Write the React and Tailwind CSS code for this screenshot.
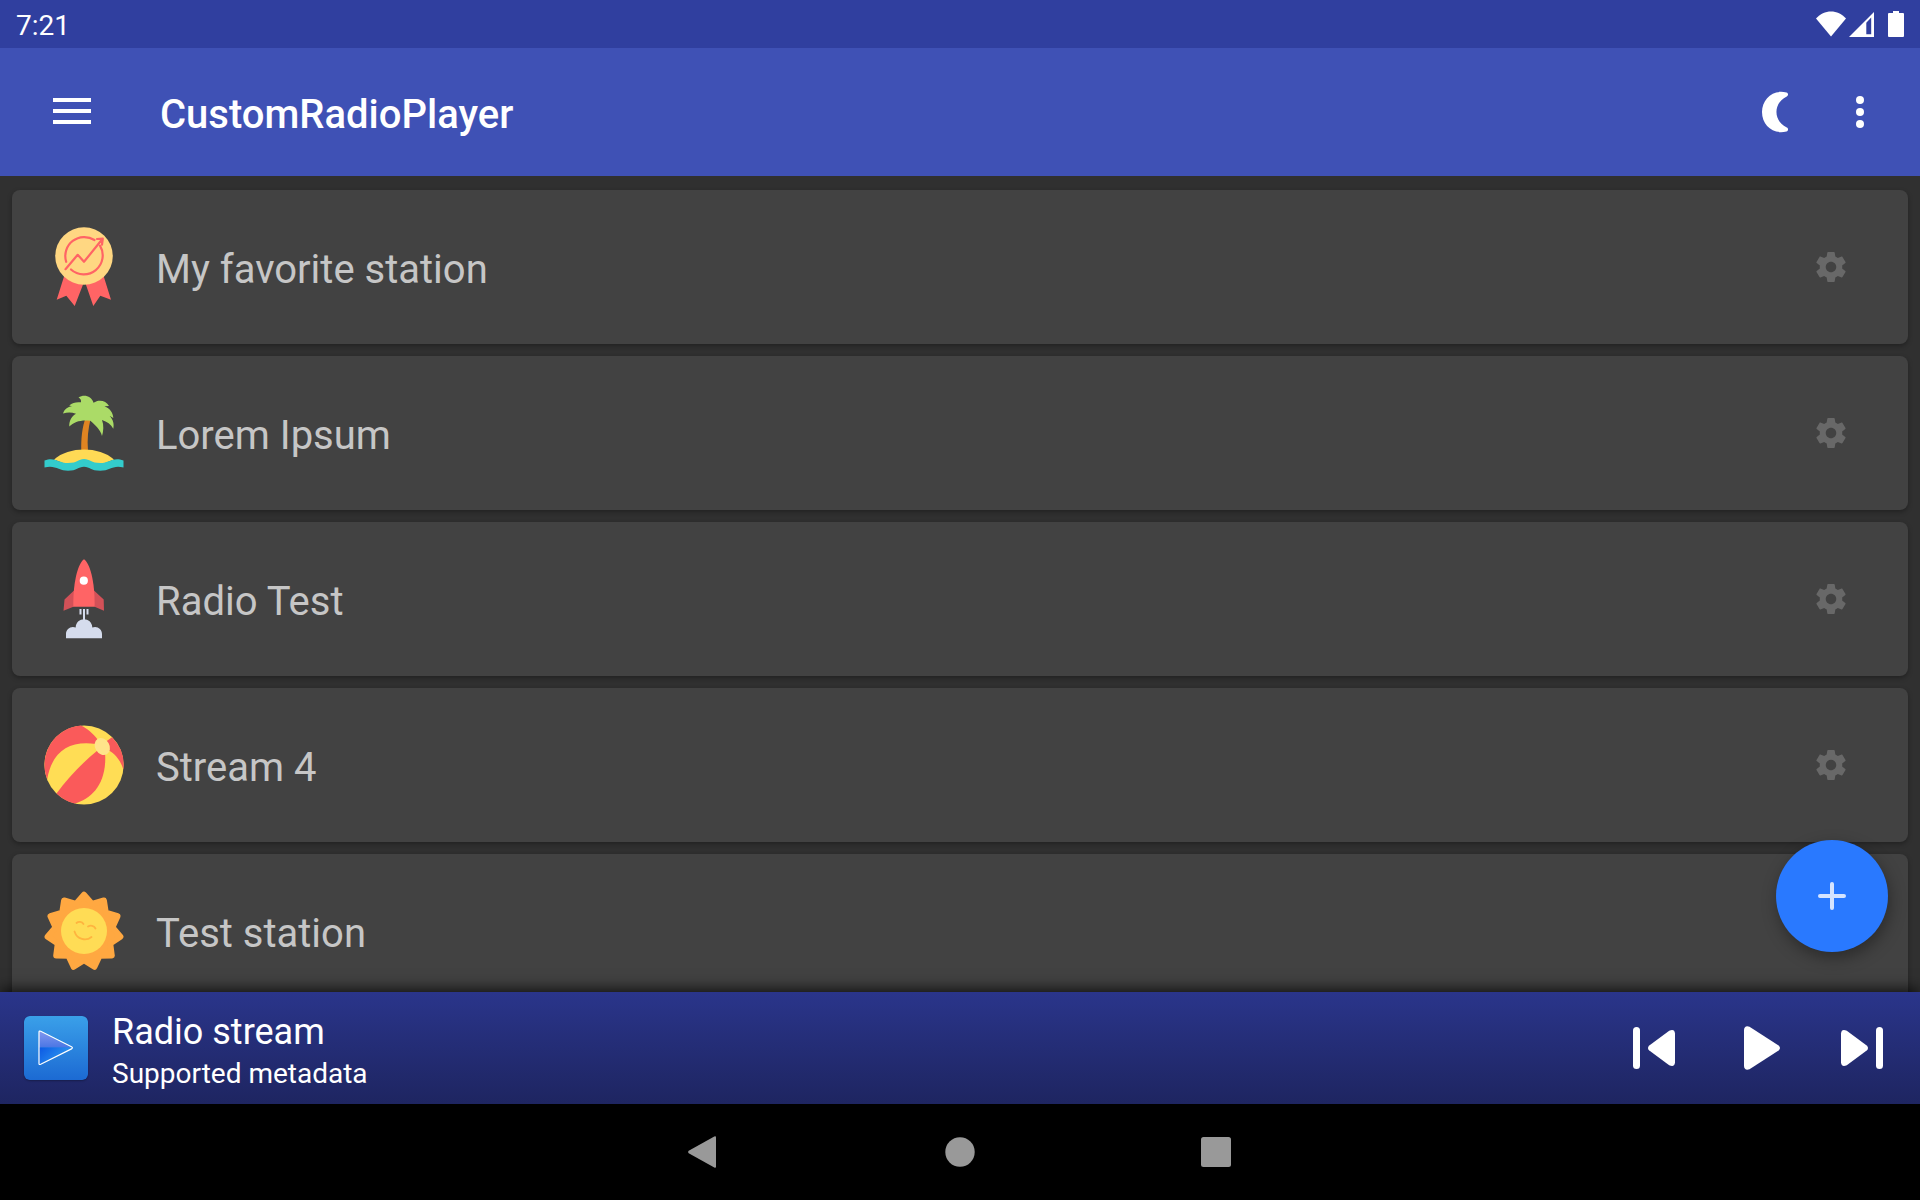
import React from "react";

function MedalIcon() {
  return (
    <svg viewBox="0 0 80 80" className="size-20 shrink-0" aria-hidden="true">
      <path fill="#ff6465" d="M20.5 48 12.7 72.7l9.6-4 8.4 10.3L40 55ZM59.3 48 67 72.7l-10.7-4-7 10.3L41 55Z" />
      <circle cx="40" cy="29" r="28.8" fill="#ffd782" />
      <g fill="none" stroke="#ff6465" strokeWidth="2.2" strokeLinecap="round" strokeLinejoin="round">
        <path d="M22.2 34.8A19 19 0 0 1 50.5 13M56 18.6A19 19 0 0 1 27 42.5" />
        <path d="M21.5 42.2 33.7 27.8l6.3 7L58.6 11.8M53 12l5.8-.4-.8 6" />
      </g>
    </svg>
  );
}

function IslandIcon() {
  return (
    <svg viewBox="0 0 80 80" className="size-20 shrink-0" aria-hidden="true">
      <path fill="#df8422" d="M42 24C38 34 37 46 37.3 58H44C43 46 44 36 47 24Z" />
      <path
        fill="#abdb67"
        d="M34.500 4.500C40 1 47.500 3 49.500 9.700C55 6 62 7.500 65 13L60.500 13.200C66 15.500 69 19.500 69.300 25L65.500 22.800C69.500 27 70.200 31.500 69.300 35.700C67 31.500 63 28.500 58 27C60 32.500 59.500 38 58 43C56.500 36.500 51 32 46.300 27.800C38 26.500 30 28.500 25.300 33.500C25 28 27.500 23.500 32 20.800C27.500 19 23.500 19 19 20.500C20.500 16 23.500 14 28 13.300L25.200 12.500C28.500 9.300 33 8.800 37 9.300C37.500 7 36 5 34.500 4.500Z"
      />
      <path fill="#ffda55" d="M10 66.500C25 53.200 55 53.200 70 66.500L56 72H24Z" />
      <path
        fill="#33cccc"
        d="M.5 67.500C11 63.500 14 70 24 70S34 66 40 66s7 4 16.300 4S69 63.500 79.500 67.500V74.500C69 71.500 66 77.700 56.300 77.700S46 73.700 40 73.700s-7 4-16 4S11 71.500.5 74.500Z"
      />
    </svg>
  );
}

function RocketIcon() {
  return (
    <svg viewBox="0 0 80 80" className="size-20 shrink-0" aria-hidden="true">
      <path fill="#d35158" d="M30 31.500 20.500 40.500 19.500 51.700 30 47.500ZM50 31.500 59.700 40.500 60 51.700 50 47.500Z" />
      <path fill="#ff6465" d="M40 .3C34.500 4 29 21 29.300 47.700H50.600C51 21 45.500 4 40 .3Z" />
      <circle cx="39.800" cy="21.700" r="4.100" fill="#fff" />
      <path stroke="#d5dced" strokeWidth="2" d="M36.500 50v5.500M43.500 50v5.500M40 50v12" />
      <path fill="#d5dced" d="M22 79.300V75C22 70 27 66.500 31.700 68.500C32 57.500 48 57.500 48.300 68.500C53 66.500 58 70 58 75V79.300Z" />
    </svg>
  );
}

function BallIcon() {
  return (
    <svg viewBox="0 0 80 80" className="size-20 shrink-0" aria-hidden="true">
      <circle cx="40" cy="40" r="39.600" fill="#ffdd55" />
      <g fill="#fa5a5a">
        <path d="M36.700.5A39.600 39.600 0 0 0 3.200 54.300C8 26 26 15 52 19L54 15C49 8.500 43 3 36.700.5Z" />
        <path d="M68 12.300A39.600 39.600 0 0 1 79.400 44.500C76 34 70 27.500 62 24L60 18Z" />
        <path d="M53.500 25.500C38 38 24 53 12.500 68.500A39.600 39.600 0 0 0 30.500 78.500C48 74 63.500 58 61 27Z" />
      </g>
      <ellipse cx="58.300" cy="21.500" rx="7.200" ry="9" transform="rotate(-30 58.300 21.500)" fill="#ffe48a" />
    </svg>
  );
}

const sunRays = Array.from({ length: 22 }, (_, i) => {
  const angle = (i * Math.PI) / 11;
  const radius = i % 2 === 0 ? 36.8 : 28.8;
  return `${(40 + radius * Math.sin(angle)).toFixed(1)},${(40.5 - radius * Math.cos(angle)).toFixed(1)}`;
}).join(" ");

function SunIcon() {
  return (
    <svg viewBox="0 0 80 80" className="size-20 shrink-0" aria-hidden="true">
      <polygon points={sunRays} fill="#ffa841" stroke="#ffa841" strokeWidth="6" strokeLinejoin="round" />
      <circle cx="40" cy="40" r="23" fill="#ffdc55" />
      <path
        fill="none"
        stroke="#ffb43f"
        strokeWidth="1.800"
        strokeLinecap="round"
        d="M32.500 32C34.500 30.200 38 30.500 39.500 33M44 35.500C46.500 34 50 34.500 51.500 37.500M30.500 40.500C33 48.500 42 50.500 47.500 46"
      />
    </svg>
  );
}

function GearIcon() {
  return (
    <svg viewBox="0 0 24 24" className="size-9" fill="currentColor" aria-hidden="true">
      <path d="M19.430 12.980c.04-.32.07-.64.07-.98s-.03-.66-.07-.98l2.110-1.650c.19-.15.24-.42.12-.64l-2-3.460c-.12-.22-.39-.3-.61-.22l-2.490 1c-.52-.4-1.080-.73-1.690-.98l-.38-2.650C14.460 2.180 14.250 2 14 2h-4c-.25 0-.46.18-.49.42l-.38 2.650c-.61.25-1.170.59-1.690.98l-2.490-1c-.23-.09-.49 0-.61.22l-2 3.460c-.13.22-.07.49.12.64l2.110 1.650c-.04.32-.07.65-.07.98s.03.66.07.98l-2.110 1.650c-.19.15-.24.42-.12.64l2 3.460c.12.22.39.3.61.22l2.490-1c.52.4 1.080.73 1.690.98l.38 2.650c.03.24.24.42.49.42h4c.25 0 .46-.18.49-.42l.38-2.650c.61-.25 1.170-.59 1.690-.98l2.490 1c.23.09.49 0 .61-.22l2-3.460c.12-.22.07-.49-.12-.64l-2.110-1.650zM12 15.500c-1.930 0-3.500-1.570-3.500-3.500s1.570-3.500 3.500-3.500 3.500 1.570 3.500 3.500-1.570 3.500-3.500 3.500z" />
    </svg>
  );
}

const stations = [
  { name: "My favorite station", Icon: MedalIcon },
  { name: "Lorem Ipsum", Icon: IslandIcon },
  { name: "Radio Test", Icon: RocketIcon },
  { name: "Stream 4", Icon: BallIcon },
  { name: "Test station", Icon: SunIcon },
];

function StatusBar() {
  return (
    <div className="flex h-12 shrink-0 items-center justify-between bg-[#303f9f] px-4 text-[28px] leading-9 text-white">
      <span className="pt-1">7:21</span>
      <div className="flex items-center" aria-hidden="true">
        <svg viewBox="0 0 30 26" className="h-[26px] w-[30px]" fill="#fff">
          <path d="M0 7.500C8-1.900 22-1.900 30 7.500L15 25.500Z" />
        </svg>
        <svg viewBox="0 0 26 26" className="ml-[3px] h-[26px] w-[26px]">
          <path fill="#fff" fillRule="evenodd" d="M0 26 25 1V26ZM17.300 23.300V11.700L22.200 6.500V23.300Z" />
        </svg>
        <svg viewBox="0 0 16 26" className="ml-[13px] h-[26px] w-4" fill="#fff">
          <path d="M5 0h6v2h4a1 1 0 0 1 1 1v22a1 1 0 0 1-1 1H1a1 1 0 0 1-1-1V3a1 1 0 0 1 1-1h4Z" />
        </svg>
      </div>
    </div>
  );
}

function AppBar() {
  return (
    <header className="flex h-32 shrink-0 items-center bg-[#3f51b5] pr-9 pl-12 text-white">
      <button type="button" aria-label="Open menu" className="flex size-12 items-center justify-center">
        <svg viewBox="0 0 48 48" className="size-12" fill="#fff" aria-hidden="true">
          <path d="M5 10h38v4H5zM5 21h38v4H5zM5 32h38v4H5z" />
        </svg>
      </button>
      <h1 className="ml-16 flex-1 pt-1.5 text-[40px] leading-[48px] font-medium">CustomRadioPlayer</h1>
      <button type="button" aria-label="Night mode" className="flex size-12 items-center justify-center">
        <svg viewBox="0 0 48 48" className="size-12" fill="#fff" aria-hidden="true">
          <path d="M30.500 4.600C32.500 5.300 32.500 7.700 30.800 8.500C17 15 17 33 30.800 39.500C32.500 40.300 32.500 42.700 30.500 43.400C17 47 6 37 6 24S17 1 30.500 4.600Z" />
        </svg>
      </button>
      <button type="button" aria-label="More options" className="ml-8 flex size-12 items-center justify-center">
        <svg viewBox="0 0 48 48" className="size-12" fill="#fff" aria-hidden="true">
          <circle cx="24" cy="12" r="4" />
          <circle cx="24" cy="24" r="4" />
          <circle cx="24" cy="36" r="4" />
        </svg>
      </button>
    </header>
  );
}

function StationCard({ name, Icon }) {
  return (
    <li className="flex h-[154px] shrink-0 items-center rounded-lg bg-[#424242] pr-[59px] pl-8 shadow-[0_2px_5px_rgba(0,0,0,0.3)]">
      <Icon />
      <span className="ml-8 flex-1 pt-1.5 text-[40px] leading-[48px] text-[#c6c6c6]">{name}</span>
      <button type="button" aria-label={`Settings for ${name}`} className="text-[#686868]">
        <GearIcon />
      </button>
    </li>
  );
}

function PlayerBar() {
  return (
    <section
      aria-label="Player"
      className="relative flex h-28 shrink-0 items-center bg-linear-to-b from-[#2a358b] to-[#1e2561] pr-7 pl-6 text-white shadow-[0_-3px_14px_rgba(0,0,0,0.75)]"
    >
      <svg viewBox="0 0 64 64" className="size-16 shrink-0 rounded-md shadow-[0_1px_2px_rgba(0,0,0,0.3)]" aria-hidden="true">
        <defs>
          <linearGradient id="cover" x1="0" y1="0" x2="0" y2="1">
            <stop offset="0" stopColor="#3aa0e9" />
            <stop offset="1" stopColor="#1c6ad3" />
          </linearGradient>
          <linearGradient id="glass" x1="0" y1="0" x2="0" y2="1">
            <stop offset="0" stopColor="#8498ef" />
            <stop offset="1" stopColor="#4a76e4" />
          </linearGradient>
          <linearGradient id="glow" x1="0" y1="0" x2="1" y2="0.500">
            <stop offset="0" stopColor="#0c58e4" />
            <stop offset="1" stopColor="#2f9cf0" />
          </linearGradient>
        </defs>
        <rect width="64" height="64" rx="5" fill="url(#cover)" />
        <path fill="url(#glass)" d="M15 15V31.500H47Z" />
        <path fill="url(#glow)" d="M15 31.500V48L48 31.500Z" />
        <path
          fill="none"
          stroke="#fff"
          strokeWidth="1.200"
          strokeLinejoin="round"
          d="M15 16.200Q15 14.500 16.700 15.300L47.500 30.700Q49.300 31.800 47.500 32.900L16.700 48.300Q15 49 15 47.500Z"
        />
      </svg>
      <div className="ml-6 flex-1 pt-1">
        <p className="text-[36px] leading-[48px]">Radio stream</p>
        <p className="text-[28px] leading-9">Supported metadata</p>
      </div>
      <div className="flex items-center gap-11">
        <button type="button" aria-label="Previous">
          <svg viewBox="0 0 60 60" className="size-15" fill="#fff" aria-hidden="true">
            <rect x="9" y="9" width="7" height="42" rx="3.500" />
            <path d="M45.200 12.800Q50.500 10.500 51 15.500V44.500Q50.500 49.500 45.200 47.200L25.300 32.600Q22.700 30 25.300 27.400Z" />
          </svg>
        </button>
        <button type="button" aria-label="Play">
          <svg viewBox="0 0 60 60" className="size-15" fill="#fff" aria-hidden="true">
            <path d="M16 12Q16.500 7 21.500 8.700L50.600 27.400Q53.400 30 50.600 32.600L21.500 51.300Q16.500 53 16 48Z" />
          </svg>
        </button>
        <button type="button" aria-label="Next">
          <svg viewBox="0 0 60 60" className="size-15" fill="#fff" aria-hidden="true">
            <path d="M14.800 12.800Q9.500 10.500 9 15.500V44.500Q9.500 49.500 14.800 47.200L34.700 32.600Q37.300 30 34.700 27.400Z" />
            <rect x="44" y="9" width="7" height="42" rx="3.500" />
          </svg>
        </button>
      </div>
    </section>
  );
}

function NavigationBar() {
  const item = "flex h-24 w-64 items-center justify-center";
  return (
    <nav className="flex h-24 shrink-0 justify-center bg-black">
      <button type="button" aria-label="Back" className={item}>
        <svg viewBox="0 0 40 40" className="size-10" fill="#999" aria-hidden="true">
          <path d="M30.300 4.400Q32 3.700 32 5.400V34.600Q32 36.300 30.300 35.600L4.700 21.200Q3.300 20 4.700 18.800Z" />
        </svg>
      </button>
      <button type="button" aria-label="Home" className={item}>
        <svg viewBox="0 0 40 40" className="size-10" fill="#999" aria-hidden="true">
          <circle cx="20" cy="20" r="14.700" />
        </svg>
      </button>
      <button type="button" aria-label="Recent apps" className={item}>
        <svg viewBox="0 0 40 40" className="size-10" fill="#999" aria-hidden="true">
          <rect x="5" y="5" width="30" height="30" rx="2.500" />
        </svg>
      </button>
    </nav>
  );
}

export default function App() {
  return (
    <div className="flex h-screen flex-col overflow-hidden bg-[#303030] font-['Roboto',sans-serif]">
      <StatusBar />
      <AppBar />
      <main className="relative min-h-0 flex-1 overflow-hidden">
        <ul className="flex flex-col gap-3 px-3 pt-3.5">
          {stations.map((station) => (
            <StationCard key={station.name} {...station} />
          ))}
        </ul>
        <button
          type="button"
          aria-label="Add station"
          className="absolute right-8 bottom-10 flex size-28 items-center justify-center rounded-full bg-[#2979ff] shadow-[2px_6px_16px_rgba(0,0,0,0.35)]"
        >
          <svg viewBox="0 0 48 48" className="size-12" stroke="#d5e4ff" strokeWidth="4" strokeLinecap="round" aria-hidden="true">
            <path d="M24 12v24M12 24h24" />
          </svg>
        </button>
      </main>
      <PlayerBar />
      <NavigationBar />
    </div>
  );
}
